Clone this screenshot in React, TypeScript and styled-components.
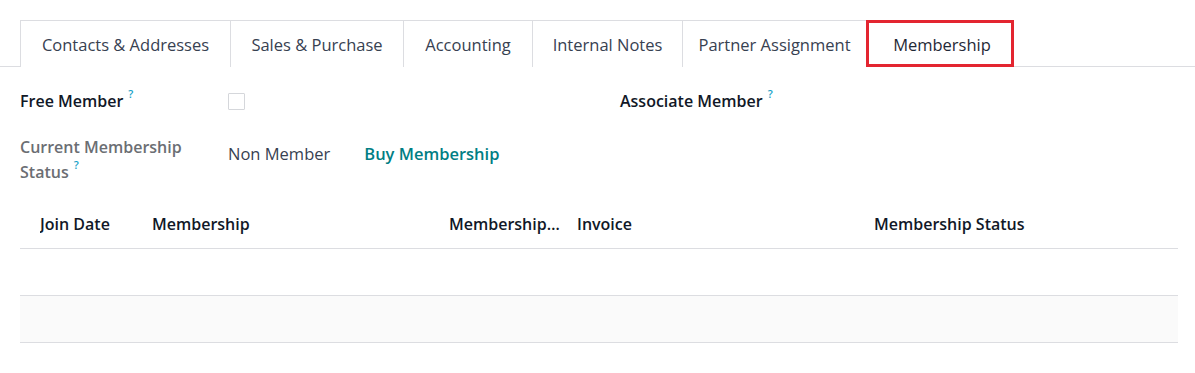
import React from 'react';
import styled, { createGlobalStyle } from 'styled-components';

const GlobalStyle = createGlobalStyle`
  body {
    margin: 0;
    background: #ffffff;
    font-family: "Open Sans", "Noto Sans", sans-serif;
    color: #374151;
  }
`;

const tabs = [
  { label: 'Contacts & Addresses', width: 210 },
  { label: 'Sales & Purchase', width: 173 },
  { label: 'Accounting', width: 129 },
  { label: 'Internal Notes', width: 150 },
  { label: 'Partner Assignment', width: 184 },
  { label: 'Membership', width: 148 },
];

const columns = [
  { label: 'Join Date', width: 112 },
  { label: 'Membership', width: 297 },
  { label: 'Membership Fee', width: 128 },
  { label: 'Invoice', width: 297 },
  { label: 'Membership Status', width: 0 },
];

export default function App() {
  return (
    <Page>
      <GlobalStyle />
      <TabBar>
        {tabs.map((tab) => (
          <Tab key={tab.label} $width={tab.width} $active={tab.label === 'Membership'}>
            {tab.label}
          </Tab>
        ))}
      </TabBar>

      <Form>
        <FieldRow>
          <Label $strong>
            Free Member<Help>?</Help>
          </Label>
          <Value>
            <Checkbox />
          </Value>
          <Label $strong $wide>
            Associate Member<Help>?</Help>
          </Label>
        </FieldRow>
        <FieldRow>
          <Label>
            Current Membership Status<Help>?</Help>
          </Label>
          <Value>
            <StatusText>Non Member</StatusText>
            <LinkButton>Buy Membership</LinkButton>
          </Value>
        </FieldRow>
      </Form>

      <Table>
        <HeaderRow>
          {columns.map((col) => (
            <HeadCell key={col.label} $width={col.width}>
              {col.label}
            </HeadCell>
          ))}
        </HeaderRow>
        <BodyRow />
        <BodyRow $shaded />
      </Table>
    </Page>
  );
}

const Page = styled('div')`
  padding: 20px 17px 30px 20px;
`;

const TabBar = styled('div')`
  display: flex;
  border-bottom: 1px solid #dcdde1;
  margin-right: -17px;
  margin-left: -20px;
  padding-left: 20px;
`;

const Tab = styled('div')<{ $active?: boolean; $width: number }>`
  position: relative;
  box-sizing: border-box;
  width: ${(p) => p.$width}px;
  height: 47px;
  display: flex;
  align-items: center;
  justify-content: center;
  font-size: 16.5px;
  white-space: nowrap;
  color: ${(p) => (p.$active ? '#1f2937' : '#374151')};
  border-top: 1px solid #dcdde1;
  border-left: 1px solid #dcdde1;
  margin-bottom: -1px;
  background: #fff;
  &:last-child {
    border-right: 1px solid #dcdde1;
  }
  ${(p) =>
    p.$active &&
    `
    padding-left: 4px;
    &::after {
      content: '';
      position: absolute;
      left: -1px;
      right: -1px;
      top: -1px;
      bottom: 0;
      border: 3px solid #e32530;
    }
  `}
`;

const Form = styled('div')`
  display: flex;
  flex-direction: column;
  padding-top: 22px;
`;

const FieldRow = styled('div')`
  display: flex;
  align-items: flex-start;
  margin-bottom: 18px;
  &:first-child {
    margin-bottom: 21px;
  }
`;

const Label = styled('div')<{ $strong?: boolean; $wide?: boolean }>`
  width: 170px;
  flex-shrink: 0;
  margin-right: 38px;
  font-size: 16px;
  line-height: 25px;
  font-weight: 600;
  color: ${(p) => (p.$strong ? '#111827' : '#6b6e73')};
  ${(p) => p.$wide && 'margin-left: 160px; width: auto;'}
`;

const Help = styled('sup')`
  color: #17a2c8;
  font-size: 11px;
  font-weight: 600;
  margin-left: 5px;
  vertical-align: 9px;
  line-height: 0;
`;

const Value = styled('div')`
  display: flex;
  align-items: center;
  gap: 34px;
  width: 232px;
  min-height: 25px;
  font-size: 16.5px;
  white-space: nowrap;
`;

const Checkbox = styled('span')`
  display: inline-block;
  width: 15px;
  height: 15px;
  border: 1px solid #d5d7db;
  border-radius: 1px;
`;

const StatusText = styled('span')`
  color: #374151;
  margin-top: 7px;
`;

const LinkButton = styled('span')`
  color: #017e84;
  font-weight: 600;
  margin-top: 7px;
`;

const Table = styled('div')`
  margin-top: 1px;
`;

const HeaderRow = styled('div')`
  display: flex;
  box-sizing: border-box;
  height: 45px;
  align-items: center;
  padding-left: 20px;
  padding-bottom: 4px;
  border-bottom: 1px solid #dcdde1;
`;

const HeadCell = styled('div')<{ $width: number }>`
  ${(p) => (p.$width ? `width: ${p.$width}px; flex-shrink: 0;` : 'flex: 1;')}
  padding-right: 14px;
  font-size: 16px;
  font-weight: 600;
  color: #111827;
  white-space: nowrap;
  overflow: hidden;
  text-overflow: ellipsis;
  box-sizing: border-box;
`;

const BodyRow = styled('div')<{ $shaded?: boolean }>`
  height: 46px;
  border-bottom: 1px solid #dcdde1;
  background: ${(p) => (p.$shaded ? '#fafafa' : '#ffffff')};
`;
